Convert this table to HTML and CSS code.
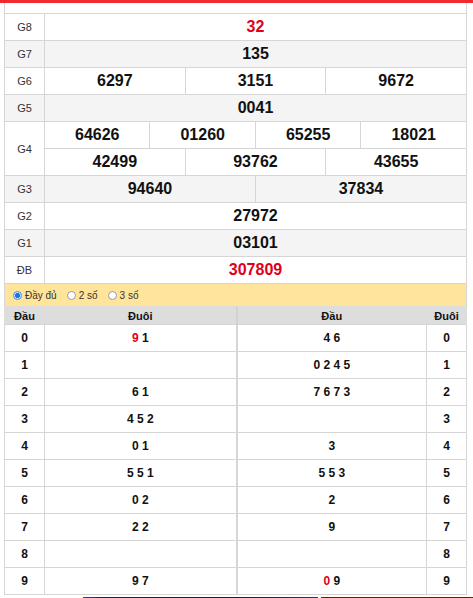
FILE: index.html
```html
<!DOCTYPE html>
<html lang="vi">
<head>
<meta charset="utf-8">
<title>KQ</title>
<link rel="stylesheet" href="styles.css">
</head>
<body>
<div class="top-bar"></div>
<div class="board">
  <div class="gap"></div>
  <table class="kq">
    <colgroup><col class="c-lbl"><col span="12"></colgroup>
    <tr><td class="lbl">G8</td><td colspan="12" class="num red">32</td></tr>
    <tr class="alt"><td class="lbl">G7</td><td colspan="12" class="num">135</td></tr>
    <tr><td class="lbl">G6</td><td colspan="4" class="num">6297</td><td colspan="4" class="num">3151</td><td colspan="4" class="num">9672</td></tr>
    <tr class="alt"><td class="lbl">G5</td><td colspan="12" class="num">0041</td></tr>
    <tr><td class="lbl" rowspan="2">G4</td><td colspan="3" class="num">64626</td><td colspan="3" class="num">01260</td><td colspan="3" class="num">65255</td><td colspan="3" class="num">18021</td></tr>
    <tr><td colspan="4" class="num">42499</td><td colspan="4" class="num">93762</td><td colspan="4" class="num">43655</td></tr>
    <tr class="alt"><td class="lbl">G3</td><td colspan="6" class="num">94640</td><td colspan="6" class="num">37834</td></tr>
    <tr><td class="lbl">G2</td><td colspan="12" class="num">27972</td></tr>
    <tr class="alt"><td class="lbl">G1</td><td colspan="12" class="num">03101</td></tr>
    <tr><td class="lbl">ĐB</td><td colspan="12" class="num red">307809</td></tr>
  </table>
  <div class="opts">
    <label class="opt"><span class="radio on"></span>Đầy đủ</label>
    <label class="opt"><span class="radio"></span>2 số</label>
    <label class="opt"><span class="radio"></span>3 số</label>
  </div>
  <table class="loto">
    <colgroup><col class="c-a"><col class="c-b"><col class="c-c"><col class="c-d"></colgroup>
    <tr><th>Đầu</th><th>Đuôi</th><th class="mid">Đầu</th><th>Đuôi</th></tr>
    <tr><td>0</td><td><span class="red">9</span> 1</td><td class="mid">4 6</td><td>0</td></tr>
    <tr><td>1</td><td></td><td class="mid">0 2 4 5</td><td>1</td></tr>
    <tr><td>2</td><td>6 1</td><td class="mid">7 6 7 3</td><td>2</td></tr>
    <tr><td>3</td><td>4 5 2</td><td class="mid"></td><td>3</td></tr>
    <tr><td>4</td><td>0 1</td><td class="mid">3</td><td>4</td></tr>
    <tr><td>5</td><td>5 5 1</td><td class="mid">5 5 3</td><td>5</td></tr>
    <tr><td>6</td><td>0 2</td><td class="mid">2</td><td>6</td></tr>
    <tr><td>7</td><td>2 2</td><td class="mid">9</td><td>7</td></tr>
    <tr><td>8</td><td></td><td class="mid"></td><td>8</td></tr>
    <tr><td>9</td><td>9 7</td><td class="mid"><span class="red">0</span> 9</td><td>9</td></tr>
  </table>
</div>
<div class="strip"><span class="s-blank"></span><span class="s-blue"></span><span class="s-gap"></span><span class="s-red"></span></div>
</body>
</html>
```
FILE: styles.css
```css
body {
  margin: 0;
  font-family: "Liberation Sans", Arial, sans-serif;
  background: #fff;
  color: #111;
}
.top-bar {
  height: 3px;
  background: #f22a2c;
}
.board {
  margin-left: 4px;
  width: 463px;
}
.gap {
  height: 10px;
  border-left: 1px solid #d6d6d6;
  border-right: 1px solid #d6d6d6;
}
table {
  width: 463px;
  border-collapse: collapse;
  table-layout: fixed;
}
td, th {
  border: 1px solid #d6d6d6;
  padding: 0;
  text-align: center;
}
.c-lbl { width: 40px; }
.kq td { height: 26px; }
.lbl {
  font-size: 11px;
  color: #333;
}
.num {
  font-size: 16px;
  font-weight: bold;
  color: #111;
}
.red { color: #e0001b; }
.alt td { background: #f4f4f4; }
.opts {
  height: 22px;
  background: #ffe59b;
  border-left: 1px solid #d6d6d6;
  border-right: 1px solid #d6d6d6;
  display: flex;
  align-items: center;
  gap: 10px;
  padding-left: 8px;
  font-size: 10px;
  color: #333;
}
.opt {
  display: flex;
  align-items: center;
  gap: 3px;
}
.radio {
  width: 9px;
  height: 9px;
  box-sizing: border-box;
  border-radius: 50%;
  border: 1px solid #9a9a9a;
  background: #fff;
}
.radio.on {
  border-color: #4a90e2;
  background: radial-gradient(circle, #1a73e8 0 2.2px, #cfe3fb 2.8px);
}
.c-a { width: 40px; }
.c-b { width: 192px; }
.c-c { width: 190px; }
.c-d { width: 40px; }
.loto th {
  background: #dddddd;
  border-color: #dddddd;
  border-bottom-color: #d6d6d6;
  height: 17px;
  font-size: 11px;
  font-weight: bold;
  color: #111;
}
.loto th.mid { border-left: 2px solid #d2d2d2; }
.loto td {
  height: 26px;
  font-size: 12px;
  font-weight: bold;
  color: #111;
}
.loto td.mid { border-left: 2px solid #d6d6d6; }
.strip {
  display: flex;
  height: 3px;
  margin-top: 2px;
}
.s-blank { width: 83px; }
.s-blue {
  width: 235px;
  background: linear-gradient(90deg, #5a2aa0 0, #2a1c5e 8%, #1c1850 60%, #3a2a70 100%);
}
.s-gap { width: 3px; }
.s-red {
  flex: 1;
  background: #8a0a0a;
}
```
